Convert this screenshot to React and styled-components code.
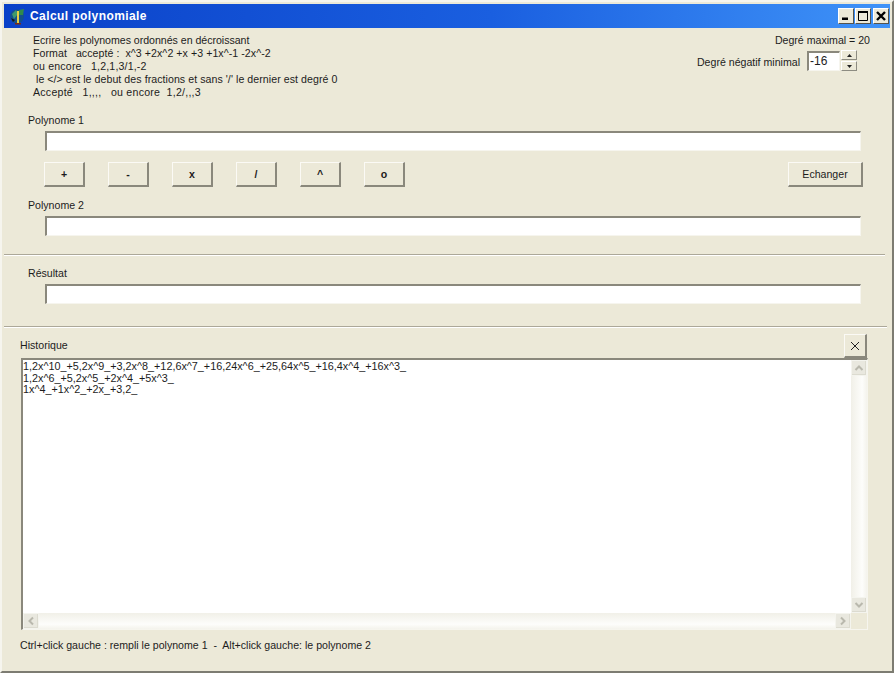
import React from "react";
import styled, { createGlobalStyle } from "styled-components";

const GlobalStyle = createGlobalStyle`
  html, body {
    margin: 0;
    padding: 0;
    background: #ece9d8;
  }
  body {
    font-family: "Liberation Sans", Arial, sans-serif;
    font-size: 10.6px;
    color: #1c1c1c;
  }
`;

const Window = styled.div`
  box-sizing: border-box;
  width: 894px;
  height: 673px;
  display: flex;
  flex-direction: column;
  padding: 2px;
  background: #ece9d8;
  border-style: solid;
  border-width: 2px;
  border-color: #f6f5ee #7d7c72 #7d7c72 #f6f5ee;
  overflow: hidden;
`;

const TitleBar = styled.div`
  flex: none;
  height: 24px;
  display: flex;
  align-items: center;
  padding: 0 1px 0 5px;
  background: linear-gradient(90deg, #0a41c8 0%, #1a5fe0 55%, #3f93f8 100%);
`;

const TitleText = styled.div`
  margin-left: 4px;
  flex: 1;
  color: #fff;
  font-size: 12px;
  font-weight: bold;
  letter-spacing: 0.42px;
`;

const CaptionButton = styled.div`
  box-sizing: border-box;
  width: 16px;
  height: 16px;
  margin-left: ${(p) => p.$gap || 0}px;
  background: #ece9d8;
  border-style: solid;
  border-width: 1px;
  border-color: #fff #55544c #55544c #fff;
  display: flex;
  align-items: center;
  justify-content: center;
`;

const Top = styled.div`
  flex: none;
  box-sizing: border-box;
  height: 86px;
  display: flex;
  justify-content: space-between;
  padding: 6px 20px 0 29px;
`;

const HelpLine = styled.div`
  line-height: 13px;
  white-space: pre;
  letter-spacing: ${(p) => p.$track}px;
`;

const Limits = styled.div`
  display: flex;
  flex-direction: column;
  align-items: flex-end;
`;

const MaxLabel = styled.div`
  line-height: 13px;
`;

const SpinRow = styled.div`
  display: flex;
  align-items: center;
  margin: 3px 13px 0 0;
`;

const SpinLabel = styled.div`
  margin-right: 7px;
  margin-top: 2px;
`;

const SpinInput = styled.div`
  box-sizing: border-box;
  width: 33px;
  height: 20px;
  background: #fff;
  border-style: solid;
  border-width: 2px 1px 1px 2px;
  border-color: #8a887c #f6f5ee #f6f5ee #8a887c;
  padding-left: 1px;
  font-size: 12px;
  line-height: 16px;
`;

const SpinArrows = styled.div`
  margin-left: 1px;
  width: 16px;
  display: flex;
  flex-direction: column;
  gap: 1px;
`;

const SpinArrow = styled.div`
  box-sizing: border-box;
  height: 10px;
  background: #ece9d8;
  border-style: solid;
  border-width: 1px;
  border-color: #fff #8d8c82 #8d8c82 #fff;
  display: flex;
  align-items: center;
  justify-content: center;
`;

const Field = styled.div`
  flex: none;
  padding: 0 0 0 24px;
  margin-top: ${(p) => p.$top || 0}px;
`;

const FieldLabel = styled.div`
  height: 13px;
  line-height: 13px;
`;

const TextBox = styled.div`
  box-sizing: border-box;
  width: 816px;
  height: 20px;
  margin: 4px 0 0 17px;
  background: #fff;
  border-style: solid;
  border-width: 2px 1px 1px 2px;
  border-color: #8a887c #f6f5ee #f6f5ee #8a887c;
`;

const ButtonRow = styled.div`
  flex: none;
  display: flex;
  align-items: center;
  margin: 11px 0 12px 40px;
  width: 819px;
`;

const Button = styled.button`
  box-sizing: border-box;
  width: ${(p) => p.$width || 41}px;
  height: 25px;
  margin: 0 ${(p) => (p.$wide ? 0 : 23)}px 0 ${(p) => (p.$wide ? "auto" : 0)};
  padding: 0;
  background: #ece9d8;
  border-style: solid;
  border-width: 1px 2px 2px 1px;
  border-color: #fbfaf5 #8a887c #8a887c #fbfaf5;
  font-family: inherit;
  font-size: 10.6px;
  font-weight: ${(p) => (p.$wide ? "normal" : "bold")};
  color: #1c1c1c;
`;

const Rule = styled.div`
  flex: none;
  box-sizing: border-box;
  width: ${(p) => p.$width}px;
  height: 2px;
  margin-top: ${(p) => p.$top}px;
  background: #aca899;
  border-bottom: 1px solid #fff;
`;

const HistoryHead = styled.div`
  flex: none;
  height: 24px;
  display: flex;
  align-items: center;
  justify-content: space-between;
  margin: 6px 23px 0 16px;
`;

const HistoryLabel = styled.div`
  margin-bottom: 2px;
`;

const CloseButton = styled.div`
  box-sizing: border-box;
  width: 23px;
  height: 24px;
  background: #ece9d8;
  border-style: solid;
  border-width: 1px 2px 2px 1px;
  border-color: #fbfaf5 #8a887c #8a887c #fbfaf5;
  display: flex;
  align-items: center;
  justify-content: center;
`;

const ListFrame = styled.div`
  flex: none;
  box-sizing: border-box;
  width: 847px;
  height: 272px;
  margin: 0 0 0 17px;
  display: grid;
  grid-template-columns: 1fr 16px;
  grid-template-rows: 1fr 16px;
  background: #fff;
  border-style: solid;
  border-color: #8a887c #f6f5ee #f6f5ee #8a887c;
  border-width: 2px 1px 1px 2px;
`;

const ListText = styled.div`
  padding: 1px 0 0 0;
  line-height: 11.5px;
  font-size: 10.8px;
  white-space: pre;
`;

const VScroll = styled.div`
  display: flex;
  flex-direction: column;
  justify-content: space-between;
  background: linear-gradient(90deg, #f1f0e8, #fdfdfb 70%, #f4f3ec);
`;

const HScroll = styled.div`
  display: flex;
  justify-content: space-between;
  background: linear-gradient(180deg, #f1f0e8, #fdfdfb 70%, #f4f3ec);
`;

const ScrollButton = styled.div`
  box-sizing: border-box;
  width: 16px;
  height: 16px;
  background: #e9e8df;
  border: 1px solid #f4f4ee;
  box-shadow: inset -1px -1px 0 #dcdbd0;
  display: flex;
  align-items: center;
  justify-content: center;
`;

const ScrollCorner = styled.div`
  background: #ece9d8;
`;

const Status = styled.div`
  flex: none;
  margin: 9px 0 0 16px;
  line-height: 13px;
  white-space: pre;
`;

const Chevron = ({ points }) => (
  <svg width="10" height="10" viewBox="0 0 10 10">
    <polyline points={points} fill="none" stroke="#b9b8ad" strokeWidth="2" />
  </svg>
);

const AppIcon = () => (
  <svg width="17" height="17" viewBox="0 0 17 17">
    <circle cx="8" cy="8.5" r="7" fill="#14508c" />
    <path d="M3 6 L7 2 L9 6 L5 11 Z" fill="#3f9a6c" />
    <path d="M10 2 L15 1 L14 7 L10 7 Z" fill="#2f8a4c" />
    <path d="M8 3 L10 3 L10 15 L8 15 Z" fill="#e4cf45" />
    <path d="M6 15 L12 15 L12 16.5 L6 16.5 Z" fill="#7a2c14" />
    <path d="M2 10 L6 12 L4 14 Z" fill="#141414" />
  </svg>
);

const operators = ["+", "-", "x", "/", "^", "o"];

const helpLines = [
  { text: "Ecrire les polynomes ordonnés en décroissant", track: -0.02 },
  { text: "Format   accepté :  x^3 +2x^2 +x +3 +1x^-1 -2x^-2", track: 0.06 },
  { text: "ou encore   1,2,1,3/1,-2", track: 0.17 },
  { text: " le </> est le debut des fractions et sans '/' le dernier est degré 0", track: 0.06 },
  { text: "Accepté   1,,,,   ou encore  1,2/,,,3", track: 0.24 },
];

const history = [
  "1,2x^10_+5,2x^9_+3,2x^8_+12,6x^7_+16,24x^6_+25,64x^5_+16,4x^4_+16x^3_",
  "1,2x^6_+5,2x^5_+2x^4_+5x^3_",
  "1x^4_+1x^2_+2x_+3,2_",
];

function App() {
  return (
    <>
      <GlobalStyle />
      <Window>
        <TitleBar>
          <AppIcon />
          <TitleText>Calcul polynomiale</TitleText>
          <CaptionButton>
            <svg width="10" height="10" viewBox="0 0 10 10">
              <rect x="1" y="6.5" width="6" height="2.5" fill="#000" />
            </svg>
          </CaptionButton>
          <CaptionButton $gap={1}>
            <svg width="10" height="10" viewBox="0 0 10 10">
              <path d="M0.5 1.5 H9.5 V9.5 H0.5 Z" fill="none" stroke="#000" />
              <rect x="0" y="0" width="10" height="2" fill="#000" />
            </svg>
          </CaptionButton>
          <CaptionButton $gap={2}>
            <svg width="10" height="10" viewBox="0 0 10 10">
              <path d="M1 1 L9 9 M9 1 L1 9" stroke="#000" strokeWidth="2.4" />
            </svg>
          </CaptionButton>
        </TitleBar>

        <Top>
          <div>
            {helpLines.map((line) => (
              <HelpLine key={line.text} $track={line.track}>
                {line.text}
              </HelpLine>
            ))}
          </div>
          <Limits>
            <MaxLabel>Degré maximal = 20</MaxLabel>
            <SpinRow>
              <SpinLabel>Degré négatif minimal</SpinLabel>
              <SpinInput>-16</SpinInput>
              <SpinArrows>
                <SpinArrow>
                  <svg width="5" height="3" viewBox="0 0 5 3">
                    <path d="M2.5 0 L5 3 L0 3 Z" fill="#222" />
                  </svg>
                </SpinArrow>
                <SpinArrow>
                  <svg width="5" height="3" viewBox="0 0 5 3">
                    <path d="M0 0 L5 0 L2.5 3 Z" fill="#222" />
                  </svg>
                </SpinArrow>
              </SpinArrows>
            </SpinRow>
          </Limits>
        </Top>

        <Field>
          <FieldLabel>Polynome 1</FieldLabel>
          <TextBox />
        </Field>

        <ButtonRow>
          {operators.map((op) => (
            <Button key={op}>{op}</Button>
          ))}
          <Button $wide $width={75}>
            Echanger
          </Button>
        </ButtonRow>

        <Field>
          <FieldLabel>Polynome 2</FieldLabel>
          <TextBox />
        </Field>

        <Rule $width={881} $top={18} />

        <Field $top={11}>
          <FieldLabel>Résultat</FieldLabel>
          <TextBox />
        </Field>

        <Rule $width={883} $top={22} />

        <HistoryHead>
          <HistoryLabel>Historique</HistoryLabel>
          <CloseButton>
            <svg width="10" height="10" viewBox="0 0 10 10">
              <path d="M1 1 L9 9 M9 1 L1 9" stroke="#222" strokeWidth="1" />
            </svg>
          </CloseButton>
        </HistoryHead>

        <ListFrame>
          <ListText>{history.join("\n")}</ListText>
          <VScroll>
            <ScrollButton>
              <Chevron points="1.5,7 5,3.5 8.5,7" />
            </ScrollButton>
            <ScrollButton>
              <Chevron points="1.5,3 5,6.5 8.5,3" />
            </ScrollButton>
          </VScroll>
          <HScroll>
            <ScrollButton>
              <Chevron points="7,1.5 3.5,5 7,8.5" />
            </ScrollButton>
            <ScrollButton>
              <Chevron points="3,1.5 6.5,5 3,8.5" />
            </ScrollButton>
          </HScroll>
          <ScrollCorner />
        </ListFrame>

        <Status>Ctrl+click gauche : rempli le polynome 1  -  Alt+click gauche: le polynome 2</Status>
      </Window>
    </>
  );
}

export default App;
